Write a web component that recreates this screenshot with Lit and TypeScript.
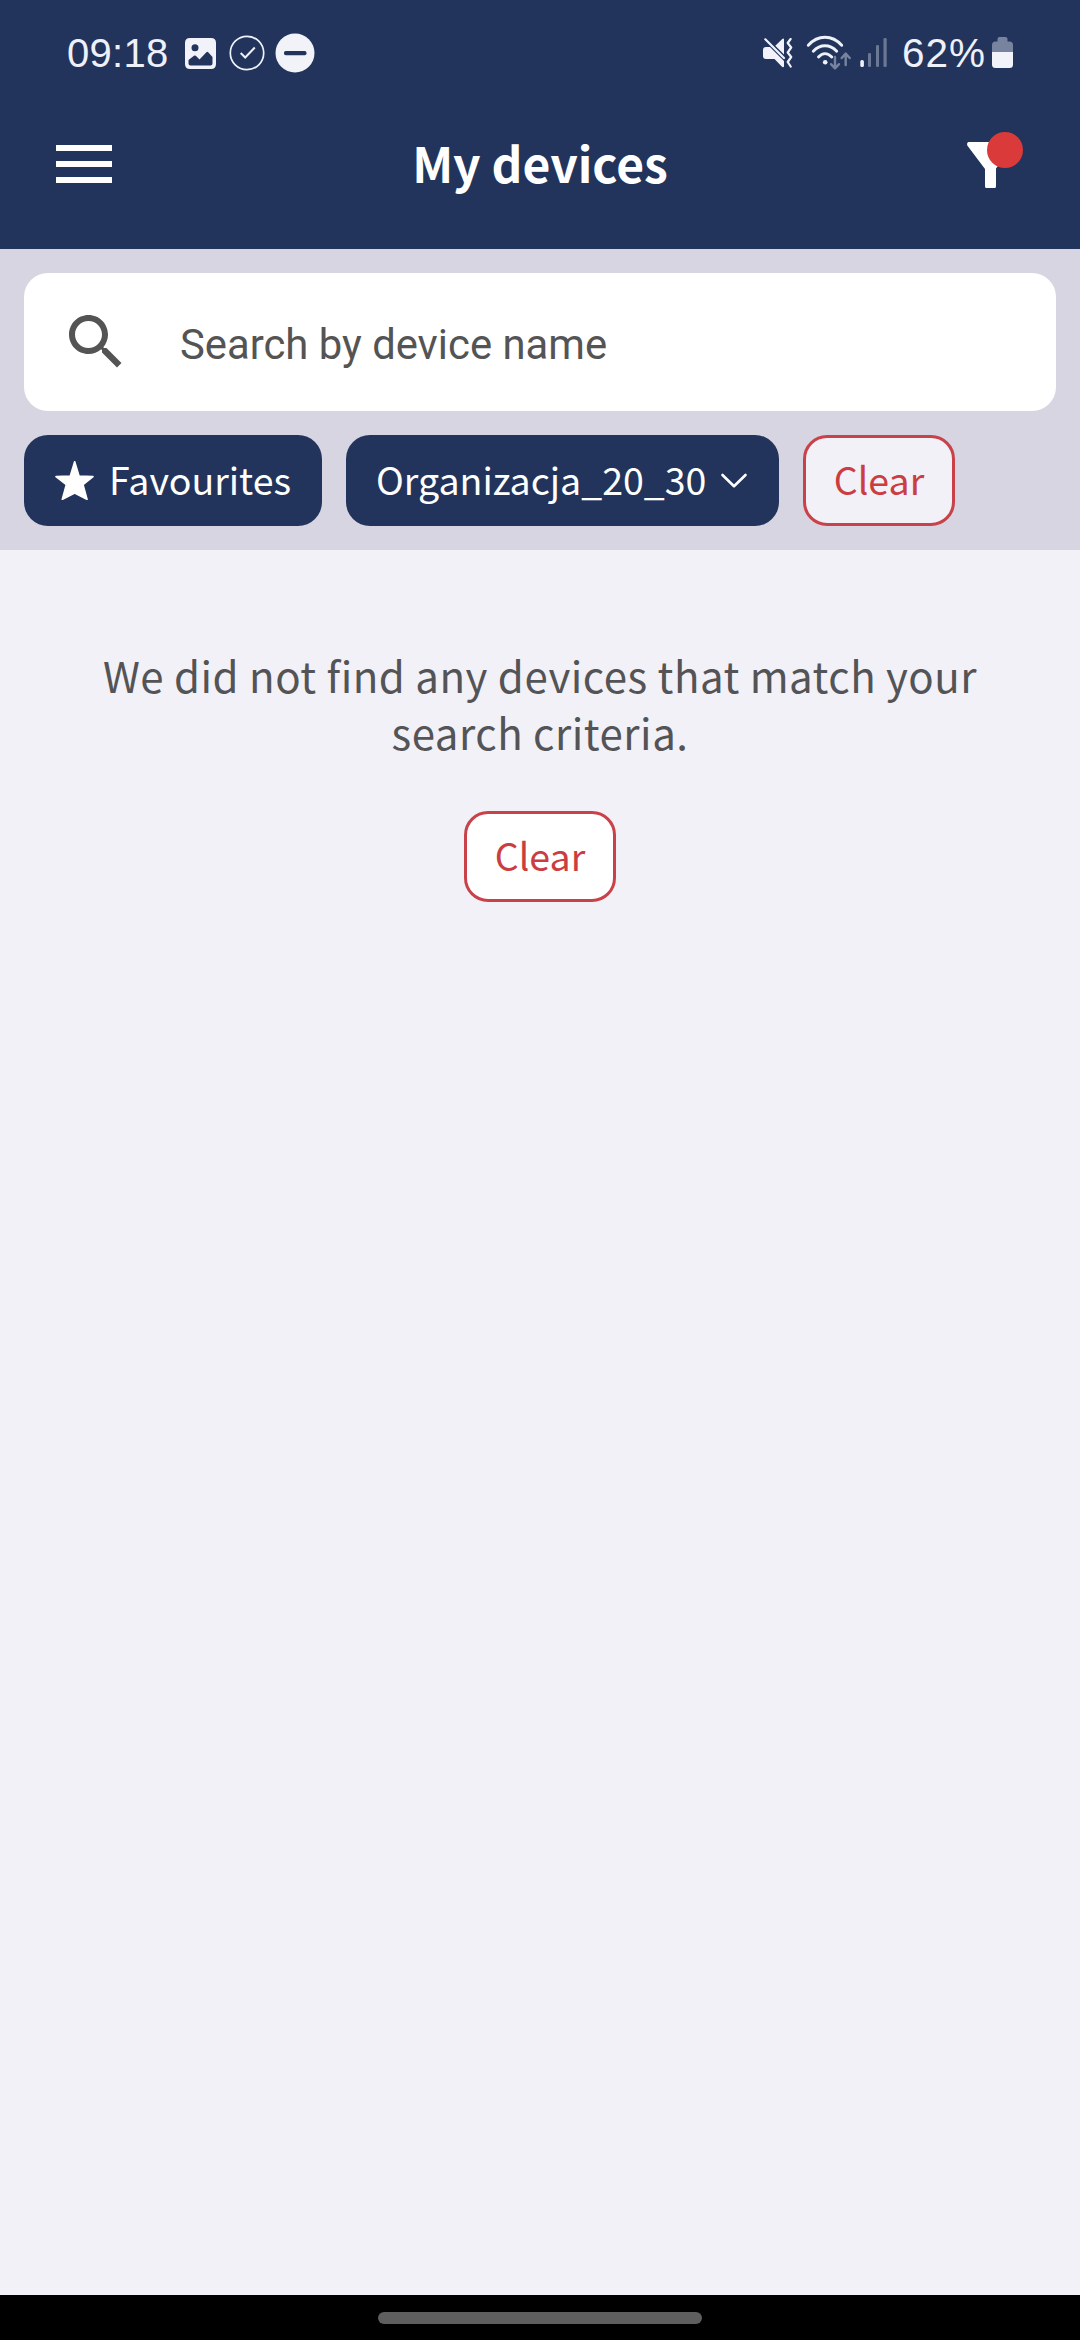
import { LitElement, html, css, svg } from "lit";
import { customElement } from "lit/decorators.js";

const imageIcon = html`<svg class="ic image" width="31" height="31" viewBox="0 0 31 31">
  <path fill="#f2f3fa" fill-rule="evenodd" d="M5 0H26Q31 0 31 5V26Q31 31 26 31H5Q0 31 0 26V5Q0 0 5 0ZM10 6.300A3.500 3.500 0 1 0 10 13.300A3.500 3.500 0 1 0 10 6.300ZM3.500 22V25.500Q3.500 27.500 5.500 27.500H25.500Q27.500 27.500 27.500 25.500V19L23.200 14.300Q22.300 13.400 21.400 14.300L14.500 21.500L10.800 17.800Q9.900 17 9 17.800Z"/>
</svg>`;

const checkIcon = html`<svg class="ic check" width="36" height="36" viewBox="0 0 36 36" fill="none" stroke="#eef0fa">
  <circle cx="18" cy="18" r="16.700" stroke-width="1.700"/>
  <path d="M11.700 18L16.200 22.500L25.800 12.500" stroke-width="2"/>
</svg>`;

const dndIcon = html`<svg class="ic dnd" width="40" height="40" viewBox="0 0 40 40">
  <circle cx="20" cy="20" r="19.500" fill="#f2f3f8"/>
  <rect x="9" y="18" width="22.500" height="4.300" rx="1.800" fill="#22345b"/>
</svg>`;

const muteIcon = html`<svg class="ic mute" width="30" height="30" viewBox="0 0 30 30">
  <path fill="#f2f3fa" d="M21 1V16.500L12.300 7.800L19 1.200Q20.500 0 21 1ZM3 9H7L21 23V28.500Q20.500 29.800 19 28.800L11.500 21H3Q0 21 0 18V12Q0 9 3 9Z"/>
  <path d="M2.300 1.300L21 20" stroke="#f2f3fa" stroke-width="2.200" stroke-linecap="round" fill="none"/>
  <path d="M27.600 1L24.700 5L28.200 9.500L24.700 14.500L28.200 19L24.700 24L27.700 28.500" stroke="#f2f3fa" stroke-width="2.200" fill="none" stroke-linejoin="round" stroke-linecap="round"/>
</svg>`;

const wifiIcon = html`<svg class="ic wifi" width="45" height="36" viewBox="0 0 45 36" fill="none">
  <g stroke="#eef0fa" stroke-width="2.900" stroke-linecap="round">
    <path d="M2.300 10.300Q9.500 2.300 19 2.300T35.700 10.300"/>
    <path d="M7.300 16.300Q12.500 10.800 19 10.800T30.700 16.300"/>
    <path d="M12.500 22Q15.500 18.600 19 18.600T25.800 22"/>
  </g>
  <circle cx="19.200" cy="27.300" r="2.300" fill="#eef0fa"/>
  <g stroke="#77839f" stroke-width="2.400" stroke-linecap="round" stroke-linejoin="round">
    <path d="M29 22V33M25 29.200L29 33.400L33 29.200"/>
    <path d="M39.700 30V19M35.700 23L39.700 18.600L43.700 23"/>
  </g>
</svg>`;

const signalIcon = html`<svg class="ic signal" width="28" height="30" viewBox="0 0 28 30">
  <rect x="0.300" y="22" width="3.600" height="7" rx="1.500" fill="#eef0fa"/>
  <g fill="#6b7894">
    <rect x="8" y="15" width="3" height="14" rx="1.300"/>
    <rect x="16" y="7" width="3" height="22" rx="1.300"/>
    <rect x="23.500" y="0" width="3.200" height="29" rx="1.300"/>
  </g>
</svg>`;

const batteryIcon = html`<svg class="ic battery" width="22" height="32" viewBox="0 0 22 32">
  <path d="M0 15V8Q0 4.500 3.500 4.500H5.500V2Q5.500 0 7.500 0H13.500Q15.500 0 15.500 2V4.500H17.500Q21 4.500 21 8V15Z" fill="#77839f"/>
  <path d="M0 15H21V27.500Q21 31 17.500 31H3.500Q0 31 0 27.500Z" fill="#f2f3fa"/>
</svg>`;

@customElement("status-bar")
export class StatusBar extends LitElement {
  static styles = css`
    :host {
      display: flex;
      box-sizing: border-box;
      height: 106px;
      padding: 0 66px 0 67px;
      align-items: center;
      color: #eef0fa;
      font-family: "Liberation Sans", sans-serif;
      font-size: 40px;
      line-height: 46px;
    }
    .ic { display: block; flex: none; }
    .time { width: 118px; white-space: nowrap; letter-spacing: 0.3px; }
    .image { margin-right: 13px; }
    .check { margin-right: 10px; }
    .spacer { flex: 1; }
    .mute { margin-right: 13px; }
    .wifi { margin-right: 9px; }
    .signal { margin-right: 14px; }
    .percent { width: 90px; white-space: nowrap; font-size: 40.500px; letter-spacing: 1px; }
  `;

  render() {
    return html`
      <span class="time">09:18</span>
      ${imageIcon}${checkIcon}${dndIcon}
      <span class="spacer"></span>
      ${muteIcon}${wifiIcon}${signalIcon}
      <span class="percent">62%</span>
      ${batteryIcon}
    `;
  }
}

@customElement("title-bar")
export class TitleBar extends LitElement {
  static styles = css`
    :host {
      display: grid;
      grid-template-columns: 200px 1fr 200px;
      height: 116px;
      margin-bottom: 27px;
      align-items: center;
    }
    .menu { display: flex; flex-direction: column; gap: 10px; margin-left: 56px; width: 56px; }
    .line { height: 6px; background: #fff; }
    .title {
      margin: -4px 0 0;
      text-align: center;
      color: #fff;
      font: 700 48px/60px "Noto Sans CJK SC", sans-serif;
      white-space: nowrap;
    }
    .filter { display: block; margin: -8px 0 0 80px; }
  `;

  render() {
    return html`
      <div class="menu">
        <div class="line"></div>
        <div class="line"></div>
        <div class="line"></div>
      </div>
      <h1 class="title">My devices</h1>
      <svg class="filter" width="70" height="60" viewBox="0 0 70 60">
        <path d="M8.500 12H53Q55 12.500 54 14.500L36 38.500V56.500Q36 58 34.500 58H26.500Q25 58 25 56.500V39L7.300 15.500Q6.500 12.500 8.500 12Z" fill="#fff"/>
        <circle cx="45" cy="20" r="18" fill="#db3a3a"/>
      </svg>
    `;
  }
}

const star = svg`<polygon points="59,2 72,45 114,47 84,71 96,115 59,96 22,115 34,71 3,47 46,45" fill="#fff" stroke="#fff" stroke-width="5" stroke-linejoin="round"/>`;

@customElement("app-root")
export class AppRoot extends LitElement {
  static styles = css`
    :host {
      display: flex;
      flex-direction: column;
      height: 2340px;
      background: #f2f1f8;
      color: #545456;
      font-family: "Noto Sans CJK SC", sans-serif;
    }
    .header { background: #22345b; }
    .filters {
      box-sizing: border-box;
      height: 301px;
      padding: 24px;
      background: #d6d5e1;
    }
    .search {
      display: flex;
      align-items: center;
      box-sizing: border-box;
      height: 138px;
      padding-left: 36px;
      border-radius: 24px;
      background: #fff;
    }
    .search-icon { display: block; margin-right: 48px; }
    .placeholder {
      padding-top: 6px;
      font: 400 41.800px/50px Roboto, sans-serif;
      color: #545454;
      white-space: nowrap;
    }
    .chips { display: flex; gap: 24px; margin-top: 24px; }
    .chip {
      display: flex;
      align-items: center;
      box-sizing: border-box;
      height: 91px;
      border-radius: 24px;
      background: #22345b;
      color: #fff;
      font-size: 37.500px;
      line-height: 56px;
      white-space: nowrap;
    }
    .label { margin-top: -4px; }
    .favourites { width: 298px; padding-left: 31px; }
    .organisation { width: 433px; padding-left: 30px; }
    .star { display: block; margin-right: 15px; }
    .chevron { display: block; margin-left: 14px; }
    .clear {
      justify-content: center;
      width: 152px;
      border: 3px solid #c9424a;
      background: #f2f1f8;
      color: #cc3d41;
    }
    .solid { background: #fff; }
    .empty {
      flex: 1;
      display: flex;
      flex-direction: column;
      align-items: center;
      padding-top: 96px;
    }
    .message {
      margin: 0 0 51px;
      width: 920px;
      text-align: center;
      font-size: 42px;
      line-height: 57px;
      letter-spacing: 0.500px;
    }
    .nav {
      display: flex;
      justify-content: center;
      box-sizing: border-box;
      height: 45px;
      padding-top: 17px;
      background: #000;
    }
    .handle { width: 324px; height: 12px; border-radius: 6px; background: #5e5e5e; }
  `;

  render() {
    return html`
      <div class="header">
        <status-bar></status-bar>
        <title-bar></title-bar>
      </div>
      <div class="filters">
        <div class="search">
          <svg class="search-icon" width="72" height="72" viewBox="0 0 24 24">
            <path fill="#545454" d="M15.500 14h-.79l-.28-.27C15.410 12.590 16 11.110 16 9.500 16 5.910 13.090 3 9.500 3S3 5.910 3 9.500 5.910 16 9.500 16c1.610 0 3.090-.59 4.230-1.570l.27.28v.79l5 4.990L20.490 19l-4.990-5zm-6 0C7.010 14 5 11.990 5 9.500S7.010 5 9.500 5 14 7.010 14 9.500 11.990 14 9.500 14z"/>
          </svg>
          <span class="placeholder">Search by device name</span>
        </div>
        <div class="chips">
          <div class="chip favourites">
            <svg class="star" width="39" height="39" viewBox="0 0 117 117">${star}</svg>
            <span class="label">Favourites</span>
          </div>
          <div class="chip organisation">
            <span class="label">Organizacja_20_30</span>
            <svg class="chevron" width="28" height="18" viewBox="0 0 28 18">
              <path d="M2.500 3L14 14.200L25.500 3" fill="none" stroke="#fff" stroke-width="2.600" stroke-linecap="round" stroke-linejoin="round"/>
            </svg>
          </div>
          <div class="chip clear"><span class="label">Clear</span></div>
        </div>
      </div>
      <div class="empty">
        <p class="message">We did not find any devices that match your search criteria.</p>
        <div class="chip clear solid"><span class="label">Clear</span></div>
      </div>
      <div class="nav"><div class="handle"></div></div>
    `;
  }
}
